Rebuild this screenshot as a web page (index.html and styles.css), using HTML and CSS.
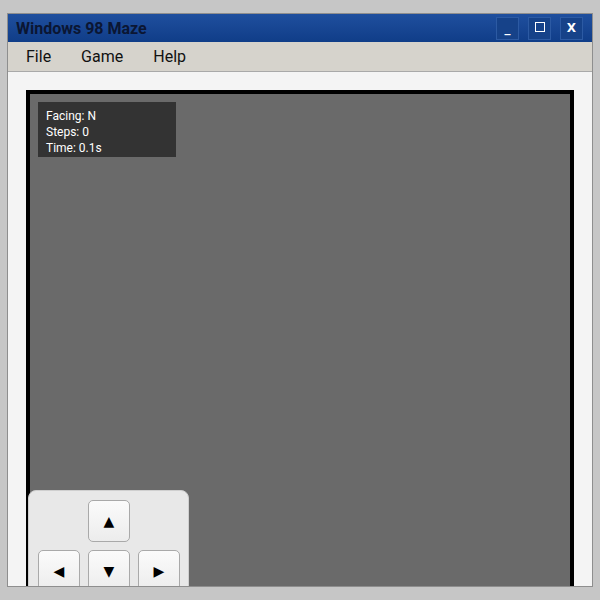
FILE: index.html
```html
<!DOCTYPE html>
<html lang="en">
<head>
  <meta charset="UTF-8">
  <meta name="viewport" content="width=device-width, initial-scale=1.0">
  <title>Windows 98 Maze</title>
  <link rel="stylesheet" href="styles.css">
</head>
<body>
  <div class="window">
    <div class="title-bar">
      <span class="title">Windows 98 Maze</span>
      <div class="title-buttons">
        <button class="tb-btn">_</button>
        <button class="tb-btn"><span class="max-box"></span></button>
        <button class="tb-btn">X</button>
      </div>
    </div>

    <div class="menu-bar">
      <span class="menu-item">File</span>
      <span class="menu-item">Game</span>
      <span class="menu-item">Help</span>
    </div>

    <div class="content">
      <div class="maze">
        <div class="info">
          <div>Facing: N</div>
          <div>Steps: 0</div>
          <div>Time: 0.1s</div>
        </div>
      </div>

      <div class="controls">
        <span></span>
        <button class="arrow">&#9650;</button>
        <span></span>
        <button class="arrow">&#9664;</button>
        <button class="arrow">&#9660;</button>
        <button class="arrow">&#9654;</button>
      </div>
    </div>
  </div>
</body>
</html>
```

FILE: styles.css
```css
body { margin: 0; background: #c6c6c6; font-family: Roboto, "Noto Sans", Arial, sans-serif; }
.window { margin: 13px 7px 0; height: 572px; border: 1px solid #8e8e8e; display: flex; flex-direction: column; overflow: hidden; background: #f4f4f4; }

.title-bar { height: 28px; flex: none; display: flex; align-items: center; justify-content: space-between; padding: 0 9px 0 8px; background: linear-gradient(#1f4f9e, #103d88); }
.title { font-family: Roboto, Arial, sans-serif; font-weight: bold; font-size: 16px; color: #0b1633; }
.title-buttons { display: flex; gap: 9px; }
.tb-btn { width: 23px; height: 23px; padding: 0; display: flex; align-items: center; justify-content: center; background: #164289; border: 1px solid #2c5aa3; color: #fff; font-family: "DejaVu Sans", sans-serif; font-weight: bold; font-size: 12px; }
.max-box { width: 8px; height: 8px; border: 1px solid #fff; margin-bottom: 3px; }

.menu-bar { height: 29px; flex: none; display: flex; align-items: center; padding-left: 3px; background: #d6d3cc; border-bottom: 1px solid #a9a9a9; }
.menu-item { padding: 0 15px; font-size: 16px; color: #111; }

.content { flex: 1; position: relative; padding: 18px 18px 0 18px; overflow: hidden; }
.maze { height: 600px; background: #6a6a6a; border: 4px solid #000; position: relative; }
.info { position: absolute; left: 8px; top: 8px; width: 122px; padding: 6px 8px 1px; background: #333; color: #fff; font-size: 12px; line-height: 16px; }

.controls { position: absolute; left: 20px; top: 418px; width: 142px; padding: 9px 8px 9px 9px; display: grid; grid-template-columns: repeat(3, 42px); gap: 8px; background: #e8e8e8; border: 1px solid #cfcfcf; border-radius: 8px; }
.arrow { width: 42px; height: 42px; padding: 0; background: linear-gradient(#fbfbfb, #ececec); border: 1px solid #a9a9a9; border-radius: 5px; font-size: 14px; color: #000; font-family: "DejaVu Sans", sans-serif; }
```
